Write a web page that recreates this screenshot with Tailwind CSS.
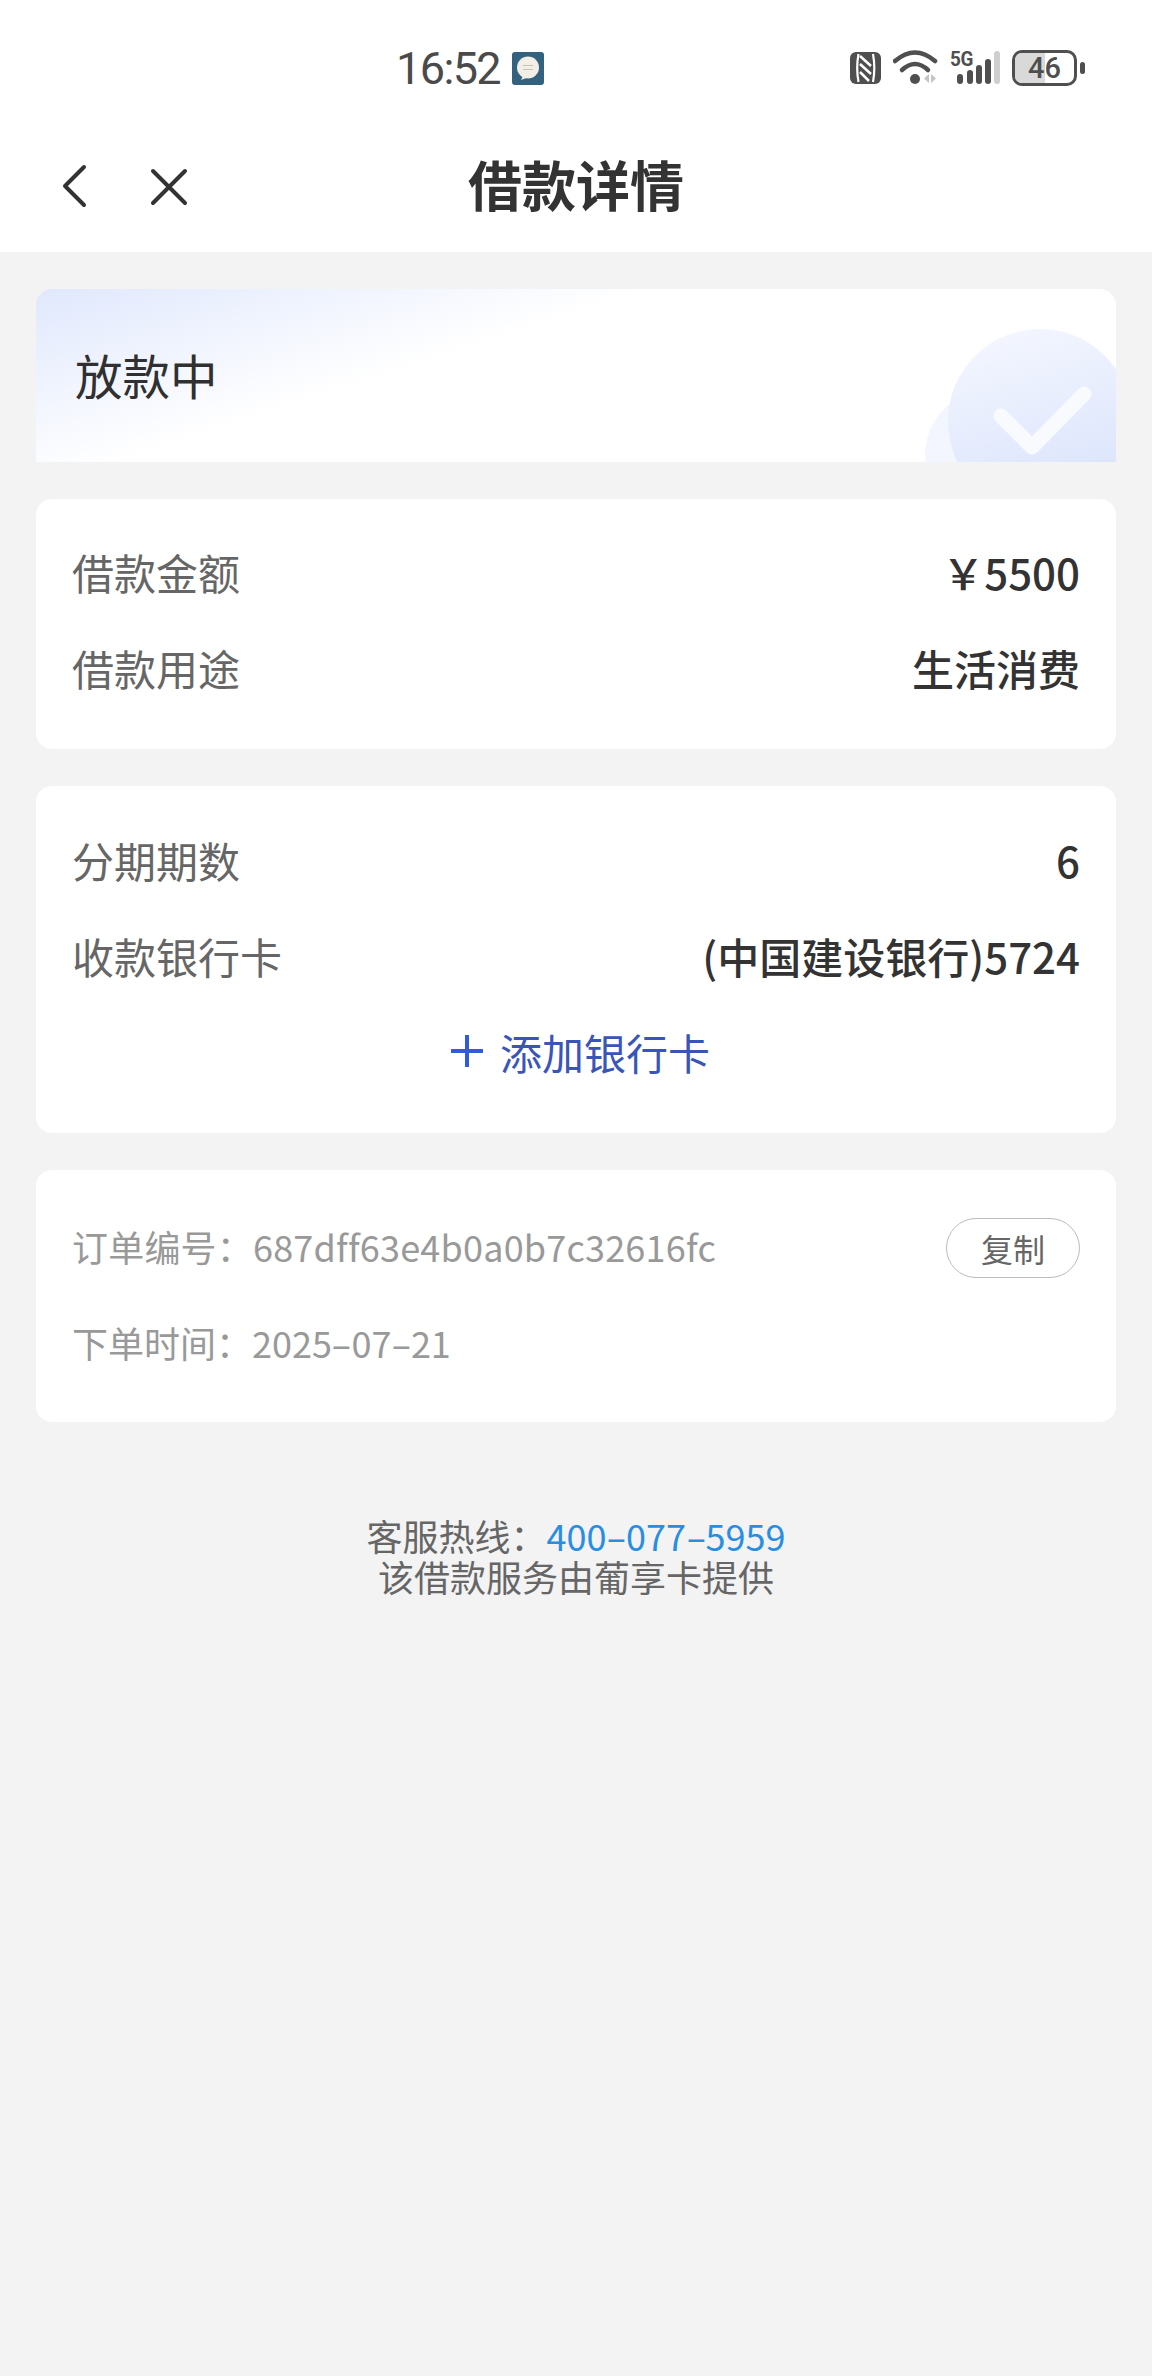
<!DOCTYPE html>
<html lang="zh">
<head>
  <meta charset="UTF-8" />
  <meta name="viewport" content="width=device-width, initial-scale=1.0" />
  <title>借款详情</title>
  <script src="https://cdn.jsdelivr.net/npm/@tailwindcss/browser@4"></script>
</head>
<body class="bg-[#f3f3f3] min-h-[2376px] font-['Noto_Sans_CJK_SC','Noto_Sans',sans-serif] text-[#333]">

  <!-- Status bar + title -->
  <header class="bg-white h-[252px] flex flex-col">
    <div class="h-[136px] relative flex items-center pl-[396px]">
      <div class="flex items-center gap-[12px] mt-[0px] text-[#4a4a4a]">
        <span class="text-[45px] leading-none font-['Roboto',sans-serif] tracking-[-1.6px]">16:52</span>
        <svg width="32" height="33" viewBox="0 0 32 33">
          <rect width="32" height="33" rx="3" fill="#33627f" />
          <circle cx="16" cy="15.5" r="11" fill="#f3eee6" />
          <path d="M11 24l-2 4 8-3z" fill="#f3eee6" />
          <path d="M11 13.5h10M11 17.5h10" stroke="#c9c2b6" stroke-width="1.2" />
        </svg>
      </div>
      <!-- status icons -->
      <div class="absolute left-[850px] top-[50px] flex items-start text-[#4f4f4f]">
        <svg width="31" height="33" viewBox="0 0 31 33" class="mt-[2px]">
          <rect width="31" height="32" rx="6" fill="#4f4f4f" />
          <path d="M8.5 2c-1.500 8-1.500 20 0 28M23 2c1.500 8 1.500 20 0 28" fill="none" stroke="#fff" stroke-width="2.200" />
          <path d="M10 4l11 10M10 12l11 10M10 20l9 9" stroke="#fff" stroke-width="2.500" />
        </svg>
        <svg width="46" height="36" viewBox="0 0 46 36" class="ml-[12px]">
          <path d="M2 11Q22 -6 42 11" fill="none" stroke="#4f4f4f" stroke-width="4.500" stroke-linecap="round" />
          <path d="M9 20Q22 8 35 20" fill="none" stroke="#4f4f4f" stroke-width="4.500" stroke-linecap="round" />
          <circle cx="22" cy="29" r="5" fill="#4f4f4f" />
          <path d="M36 24v9l-5-4.500zM38 24v9l5-4.500z" fill="#c4c4c4" />
        </svg>
        <div class="relative w-[50px] h-[36px] ml-[11px]">
          <span class="absolute left-0 top-[-1px] text-[21px] leading-[20px] font-bold font-['Roboto',sans-serif] tracking-[-0.5px] scale-x-90 origin-left">5G</span>
          <svg width="50" height="36" viewBox="0 0 50 36">
            <rect x="7" y="24" width="6" height="10" rx="3" fill="#4f4f4f" />
            <rect x="17" y="20" width="6" height="14" rx="3" fill="#4f4f4f" />
            <rect x="26" y="15" width="6" height="19" rx="3" fill="#4f4f4f" />
            <rect x="35" y="9" width="6" height="25" rx="3" fill="#4f4f4f" />
            <rect x="44" y="1" width="6" height="33" rx="3" fill="#cfcfcf" />
          </svg>
        </div>
        <div class="relative w-[65px] h-[36px] ml-[12px] border-[3px] border-[#4f4f4f] rounded-[10px] overflow-hidden">
          <div class="absolute left-0 top-0 bottom-0 w-[30px] bg-[#d9d9d9]"></div>
          <span class="absolute inset-0 flex items-center justify-center text-[29px] leading-none font-medium font-['Roboto',sans-serif]">46</span>
        </div>
        <div class="w-[5px] h-[12px] bg-[#4f4f4f] rounded-full ml-[3px] mt-[12px]"></div>
      </div>
    </div>
    <div class="relative flex-1 flex items-start justify-center">
      <svg class="absolute left-[60px] top-[28px]" width="28" height="44" viewBox="0 0 28 44">
        <path d="M24 3L5 22l19 19" fill="none" stroke="#333" stroke-width="4" stroke-linecap="round" stroke-linejoin="round" />
      </svg>
      <svg class="absolute left-[149px] top-[31px]" width="40" height="40" viewBox="0 0 40 40">
        <path d="M4 4l32 32M36 4L4 36" fill="none" stroke="#333" stroke-width="4" stroke-linecap="round" />
      </svg>
      <h1 class="text-[54px] leading-[80px] font-bold mt-[8px]">借款详情</h1>
    </div>
  </header>

  <main class="px-[36px] pt-[37px] flex flex-col gap-[37px]">
    <!-- Status card -->
    <section class="relative h-[173px] rounded-t-[16px] overflow-hidden bg-white bg-[linear-gradient(162deg,#e0e8fd_0%,#ffffff_38%)] flex items-center pl-[39px]">
      <span class="text-[47.5px] leading-none mt-[-1px] text-[#303030]">放款中</span>
      <svg class="absolute right-0 bottom-0" width="192" height="133" viewBox="0 0 192 133">
        <defs>
          <linearGradient id="disc" x1="0" y1="0" x2="0.3" y2="1">
            <stop offset="0" stop-color="#f6f8ff" />
            <stop offset="1" stop-color="#dbe4fc" />
          </linearGradient>
        </defs>
        <circle cx="66" cy="126" r="65" fill="#f3f6fe" />
        <circle cx="116" cy="92" r="92" fill="url(#disc)" />
        <path d="M77 87l31 31 52-53" fill="none" stroke="#f9fafe" stroke-width="15" stroke-linecap="round" stroke-linejoin="round" />
      </svg>
    </section>

    <!-- Amount card -->
    <section class="bg-white rounded-[16px] h-[250px] px-[36px] pt-[24px] flex flex-col text-[42px]">
      <div class="h-[96px] flex items-center justify-between">
        <span class="text-[#666]">借款金额</span>
        <span class="font-medium text-[#333]">￥5500</span>
      </div>
      <div class="h-[96px] flex items-center justify-between">
        <span class="text-[#666]">借款用途</span>
        <span class="font-medium text-[#333]">生活消费</span>
      </div>
    </section>

    <!-- Installment card -->
    <section class="bg-white rounded-[16px] h-[347px] px-[36px] pt-[25px] flex flex-col text-[42px]">
      <div class="h-[96px] flex items-center justify-between">
        <span class="text-[#666]">分期期数</span>
        <span class="font-medium text-[#333]">6</span>
      </div>
      <div class="h-[96px] flex items-center justify-between">
        <span class="text-[#666]">收款银行卡</span>
        <span class="font-medium text-[#333]">(中国建设银行)5724</span>
      </div>
      <div class="h-[96px] flex items-center justify-center text-[#3a55b8] ml-[9px]">
        <svg width="32" height="32" viewBox="0 0 32 32" class="mr-[17px]">
          <path d="M16 1v30M1 16h30" stroke="#2f5bdc" stroke-width="4" stroke-linecap="round" />
        </svg>
        <span>添加银行卡</span>
      </div>
    </section>

    <!-- Order card -->
    <section class="bg-white rounded-[16px] h-[252px] px-[36px] pt-[48px] flex flex-col text-[36px] text-[#999]">
      <div class="h-[60px] flex items-center justify-between">
        <span class="mt-[-4px] tracking-[0.2px]">订单编号：687dff63e4b0a0b7c32616fc</span>
        <button class="w-[134px] h-[60px] rounded-full border border-[#bbb] text-[32px] text-[#666] flex items-center justify-center">复制</button>
      </div>
      <div class="h-[60px] mt-[36px] flex items-center">
        <span class="mt-[-5px]">下单时间：2025<span class="inline-block mx-[3.500px] scale-x-[1.7]">-</span>07<span class="inline-block mx-[3.500px] scale-x-[1.7]">-</span>21</span>
      </div>
    </section>
  </main>

  <footer class="mt-[93px] flex flex-col items-center text-[36px] leading-[41px] text-[#666]">
    <p>客服热线：<span class="text-[#2a8ee0]">400<span class="inline-block mx-[3.500px] scale-x-[1.7]">-</span>077<span class="inline-block mx-[3.500px] scale-x-[1.7]">-</span>5959</span></p>
    <p>该借款服务由葡享卡提供</p>
  </footer>
</body>
</html>
